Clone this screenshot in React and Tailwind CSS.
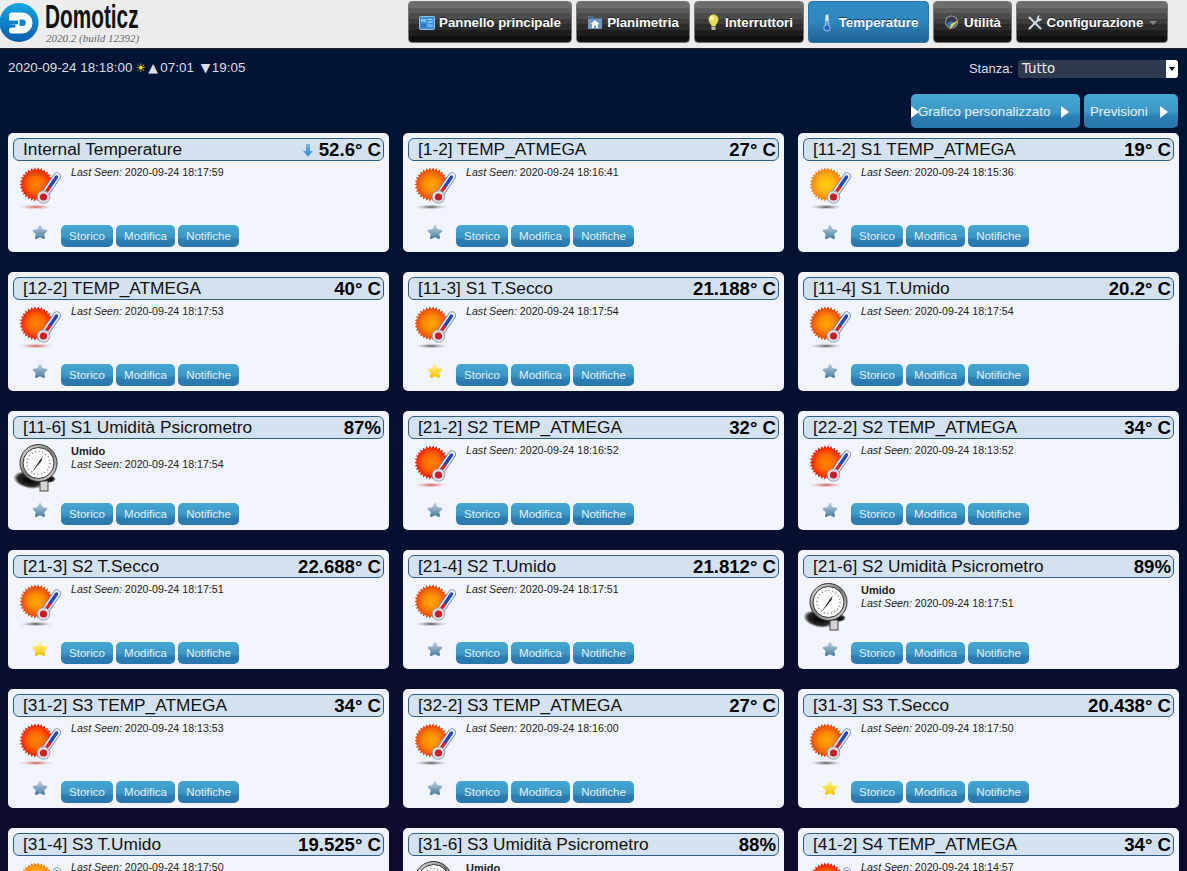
import React from "react";

const BTN_DARK = "bg-[linear-gradient(180deg,#6e6e6e_0,#6e6e6e_14%,#5c5c5c_14%,#5c5c5c_28%,#4c4c4c_28%,#4c4c4c_42%,#3c3c3c_42%,#3c3c3c_56%,#2c2c2c_56%,#2c2c2c_70%,#1e1e1e_70%,#1e1e1e_84%,#111111_84%,#111111_100%)]";
const BTN_ACTIVE = "bg-[linear-gradient(180deg,#2f8cc2_0,#2f88bf_50%,#2877ab_68%,#1f6593_100%)]";
const BTN_BLUE = "bg-[linear-gradient(180deg,#45a7d2_0,#3c98c7_52%,#2c7db2_68%,#2877ae_100%)]";

function PanelIcon() {
  return (
    <svg width="16" height="14" viewBox="0 0 16 14">
      <rect x="0.5" y="0.5" width="15" height="13" rx="1" fill="#3f8fd8" stroke="#8fc0e8" />
      <rect x="2" y="3" width="5" height="3" fill="#7cc0f0" />
      <rect x="8.5" y="3" width="5" height="1" fill="#b4dcf6" />
      <rect x="8.5" y="5.5" width="5" height="1" fill="#b4dcf6" />
      <rect x="2" y="8" width="5" height="3" fill="#2f73b8" />
      <rect x="8.5" y="8" width="5" height="3" fill="#6fb4e6" />
    </svg>
  );
}
function PlanIcon() {
  return (
    <svg width="16" height="15" viewBox="0 0 16 15">
      <path d="M1 1h5l1 2h8v11H1z" fill="#4e6c8e" />
      <path d="M1 4h14v10H1z" fill="#6f97c2" />
      <path d="M8 5l4.500 4H11v4H9v-2.500H7V13H5V9H3.500z" fill="#eef2f6" />
    </svg>
  );
}
function BulbIcon() {
  return (
    <svg width="11" height="17" viewBox="0 0 11 17">
      <path d="M5.500 0.500a5 5 0 0 1 5 5c0 2.500-2.300 3.700-3 6.500h-4c-.7-2.800-3-4-3-6.500a5 5 0 0 1 5-5z" fill="#e6dc55" />
      <ellipse cx="4" cy="4" rx="1.800" ry="2.200" fill="#fbf7b0" />
      <rect x="3.500" y="12.500" width="4" height="3.500" fill="#b9b9a8" />
    </svg>
  );
}
function ThermoNav() {
  return (
    <svg width="10" height="18" viewBox="0 0 10 18">
      <rect x="3.500" y="0.500" width="3" height="12" rx="1.500" fill="#dfeaf5" stroke="#9fc3e0" strokeWidth="0.700" />
      <circle cx="5" cy="14" r="3.200" fill="#2a62c8" stroke="#bcd6ec" strokeWidth="0.800" />
      <rect x="4.400" y="7" width="1.200" height="6" fill="#2a62c8" />
    </svg>
  );
}
function UtilIcon() {
  return (
    <svg width="16" height="16" viewBox="0 0 16 16">
      <circle cx="7.500" cy="7" r="6" fill="#333a44" stroke="#8b929a" strokeWidth="1.200" />
      <path d="M3 9a5 5 0 0 1 9 0l-2 3H5z" fill="#3272c4" />
      <path d="M15 5L5.500 15l1.500-6z" fill="#e8cf3c" />
    </svg>
  );
}
function ToolsIcon() {
  return (
    <svg width="16" height="16" viewBox="0 0 16 16" fill="none">
      <path d="M2.500 2.500l11 11" stroke="#cfd6de" strokeWidth="2" strokeLinecap="round" />
      <path d="M11 5L2.500 13.500" stroke="#cfd6de" strokeWidth="2.200" strokeLinecap="round" />
      <path d="M15 3.500a3 3 0 0 1-4.300 2.400L9.800 4a3 3 0 0 1 3.200-3.500L11.500 2.500l1.500 1.500z" fill="#dfe4ea" />
    </svg>
  );
}

function NavButton({ w, icon, label, active, caret }) {
  return (
    <div
      className={`flex h-[42px] items-center justify-center gap-1 rounded-[4px] border pt-px text-[13.300px] font-bold text-white [text-shadow:0_-1px_0_rgba(0,0,0,.6)] ${w} ${
        active ? `border-[#2a78ab] ${BTN_ACTIVE}` : `border-[#777] ${BTN_DARK}`
      }`}
    >
      <span className="flex w-[16px] justify-center">{icon}</span>
      <span>{label}</span>
      {caret && <span className="ml-[2px] h-0 w-0 border-x-[4px] border-t-[4px] border-x-transparent border-t-[#888]" />}
    </div>
  );
}

function Play({ className }) {
  return <span className={`inline-block h-0 w-0 border-y-[6px] border-l-[8px] border-y-transparent border-l-white ${className || ""}`} />;
}

function SunIcon({ tone }) {
  const id = `sun-${tone}`;
  const colors = {
    red: ["#ff8400", "#ff6a00", "#f01408"],
    orange: ["#ffa800", "#fb8a06", "#e83c10"],
    yellow: ["#ffcc10", "#ffb812", "#f07a18"],
  }[tone];
  const pts = [];
  const n = 60;
  for (let i = 0; i < n; i++) {
    const r = i % 2 ? 14.600 : 17;
    const a = (i / n) * Math.PI * 2;
    pts.push(`${(17.5 + r * Math.cos(a)).toFixed(2)},${(17.5 + r * Math.sin(a)).toFixed(2)}`);
  }
  return (
    <svg width="42" height="44" viewBox="0 0 42 44" className="overflow-visible">
      <defs>
        <radialGradient id={id}>
          <stop offset="0" stopColor={colors[0]} />
          <stop offset="0.45" stopColor={colors[1]} />
          <stop offset="1" stopColor={colors[2]} />
        </radialGradient>
        <radialGradient id={`${id}-s`}>
          <stop offset="0" stopColor={tone === "red" ? "#c8504a" : "#444"} />
          <stop offset="1" stopColor={tone === "red" ? "#f0c8c8" : "#cfd4dc"} stopOpacity="0.100" />
        </radialGradient>
      </defs>
      <ellipse cx="17" cy="40" rx="16" ry="2.500" fill={`url(#${id}-s)`} />
      <polygon points={pts.join(" ")} fill={`url(#${id})`} />
      <path d="M24.500 29L38 9.500" stroke="#6f86b4" strokeWidth="8" strokeLinecap="round" />
      <path d="M24.500 29L38 9.500" stroke="#eef1f6" strokeWidth="6.400" strokeLinecap="round" />
      <path d="M31 19.500L37.500 10" stroke="#1f48c0" strokeWidth="3.400" strokeLinecap="round" />
      <path d="M24.500 29L31 19.500" stroke="#d8202a" strokeWidth="3.400" />
      <circle cx="24.500" cy="30" r="6.300" fill="#d8dde4" stroke="#8c98aa" strokeWidth="0.800" />
      <circle cx="24.500" cy="30" r="3.600" fill="#c81e28" />
    </svg>
  );
}

function GaugeIcon() {
  return (
    <svg width="44" height="50" viewBox="0 0 44 50" className="overflow-visible">
      <defs>
        <radialGradient id="gshadow">
          <stop offset="0" stopColor="#000" />
          <stop offset="0.7" stopColor="#111" stopOpacity="0.900" />
          <stop offset="1" stopColor="#000" stopOpacity="0" />
        </radialGradient>
        <linearGradient id="gring" x1="0" y1="0" x2="1" y2="1">
          <stop offset="0" stopColor="#f4f4f4" />
          <stop offset="0.5" stopColor="#777" />
          <stop offset="1" stopColor="#eee" />
        </linearGradient>
      </defs>
      <ellipse cx="15" cy="37" rx="16" ry="8.500" fill="url(#gshadow)" transform="rotate(12 15 37)" />
      <ellipse cx="34" cy="36" rx="8" ry="4" fill="url(#gshadow)" />
      <rect x="26" y="38" width="8" height="10" fill="#d4d4d4" stroke="#444" strokeWidth="1" />
      <circle cx="24.500" cy="20" r="18.500" fill="url(#gring)" stroke="#333" strokeWidth="1" />
      <circle cx="24.500" cy="20" r="15.500" fill="#fafbfb" stroke="#333" strokeWidth="1" />
      <circle cx="24.500" cy="20" r="11.500" fill="none" stroke="#8a8a8a" strokeWidth="1.500" strokeDasharray="1 2.600" />
      <path d="M17.500 30L26 17l2.500-3-1 4z" fill="#222" />
    </svg>
  );
}

function Star({ on }) {
  const id = on ? "star-on" : "star-off";
  return (
    <svg width="16" height="16" viewBox="0 0 16 16">
      <defs>
        <linearGradient id={id} x1="0" y1="0" x2="0" y2="1">
          <stop offset="0" stopColor={on ? "#fff48c" : "#b8ccdc"} />
          <stop offset="1" stopColor={on ? "#f2c400" : "#4f7fa2"} />
        </linearGradient>
      </defs>
      <polygon
        points="8,2 10,6 14.300,6.700 11.200,9.800 12,14 8,12 4,14 4.800,9.800 1.700,6.700 6,6"
        fill={`url(#${id})`}
        stroke={`url(#${id})`}
        strokeWidth="2"
        strokeLinejoin="round"
      />
    </svg>
  );
}

function TrendDown() {
  return (
    <svg width="10" height="14" viewBox="0 0 10 14">
      <defs>
        <linearGradient id="trend" x1="0" y1="0" x2="0" y2="1">
          <stop offset="0" stopColor="#7db6e6" />
          <stop offset="1" stopColor="#2f86d8" />
        </linearGradient>
      </defs>
      <path d="M3 1h4v7h3l-5 5.500L0 8h3z" fill="url(#trend)" />
    </svg>
  );
}

function SmallButton({ w, label }) {
  return (
    <div className={`flex h-[22px] items-center justify-center rounded-[5px] pt-px text-[11.500px] text-[#e4eff7] ${BTN_BLUE} ${w}`}>
      {label}
    </div>
  );
}

function Card({ title, value, seen, kind, star, trend }) {
  const num = parseFloat(value);
  const tone = num < 20 ? "yellow" : num < 30 ? "orange" : "red";
  return (
    <div className="h-[119px] rounded-[5px] bg-[#f1f4fa] px-[5px] pt-[5px] text-black">
      <div className="flex h-[23px] items-center rounded-[6px] border border-[#2f5d85] bg-[#d4e1ef] pl-[9px] pr-[2px]">
        <span className="flex-1 truncate text-[17.300px] text-[#111]">{title}</span>
        {trend && (
          <span className="mr-[6px] flex">
            <TrendDown />
          </span>
        )}
        <span className="text-[18.600px] font-bold">{value}</span>
      </div>
      <div className="flex h-[60px]">
        <div className={`flex w-[58px] shrink-0 ${kind === "gauge" ? "pl-px pt-[4px]" : "pl-[6px] pt-[6px]"}`}>
          {kind === "gauge" ? <GaugeIcon /> : <SunIcon tone={tone} />}
        </div>
        <div className={`text-[10.650px] leading-[13px] text-[#222] ${kind === "gauge" ? "pt-[6px]" : "pt-[5px]"}`}>
          {kind === "gauge" && <div className="text-[11px] font-bold">Umido</div>}
          <div>
            <em>Last Seen:</em> {seen}
          </div>
        </div>
      </div>
      <div className="flex h-[30px] items-start">
        <div className="flex w-[48px] pl-[19px] pt-[3px]">
          <Star on={star} />
        </div>
        <div className="flex gap-[3px] pt-[4px]">
          <SmallButton w="w-[52px]" label="Storico" />
          <SmallButton w="w-[59px]" label="Modifica" />
          <SmallButton w="w-[61px]" label="Notifiche" />
        </div>
      </div>
    </div>
  );
}

const CARDS = [
  { title: "Internal Temperature", value: "52.6° C", seen: "2020-09-24 18:17:59", trend: true },
  { title: "[1-2] TEMP_ATMEGA", value: "27° C", seen: "2020-09-24 18:16:41" },
  { title: "[11-2] S1 TEMP_ATMEGA", value: "19° C", seen: "2020-09-24 18:15:36" },
  { title: "[12-2] TEMP_ATMEGA", value: "40° C", seen: "2020-09-24 18:17:53" },
  { title: "[11-3] S1 T.Secco", value: "21.188° C", seen: "2020-09-24 18:17:54", star: true },
  { title: "[11-4] S1 T.Umido", value: "20.2° C", seen: "2020-09-24 18:17:54" },
  { title: "[11-6] S1 Umidità Psicrometro", value: "87%", seen: "2020-09-24 18:17:54", kind: "gauge" },
  { title: "[21-2] S2 TEMP_ATMEGA", value: "32° C", seen: "2020-09-24 18:16:52" },
  { title: "[22-2] S2 TEMP_ATMEGA", value: "34° C", seen: "2020-09-24 18:13:52" },
  { title: "[21-3] S2 T.Secco", value: "22.688° C", seen: "2020-09-24 18:17:51", star: true },
  { title: "[21-4] S2 T.Umido", value: "21.812° C", seen: "2020-09-24 18:17:51" },
  { title: "[21-6] S2 Umidità Psicrometro", value: "89%", seen: "2020-09-24 18:17:51", kind: "gauge" },
  { title: "[31-2] S3 TEMP_ATMEGA", value: "34° C", seen: "2020-09-24 18:13:53" },
  { title: "[32-2] S3 TEMP_ATMEGA", value: "27° C", seen: "2020-09-24 18:16:00" },
  { title: "[31-3] S3 T.Secco", value: "20.438° C", seen: "2020-09-24 18:17:50", star: true },
  { title: "[31-4] S3 T.Umido", value: "19.525° C", seen: "2020-09-24 18:17:50" },
  { title: "[31-6] S3 Umidità Psicrometro", value: "88%", seen: "2020-09-24 18:17:50", kind: "gauge" },
  { title: "[41-2] S4 TEMP_ATMEGA", value: "34° C", seen: "2020-09-24 18:14:57" },
];

function Logo() {
  return (
    <div className="flex h-full items-start">
      <svg width="40" height="42" viewBox="0 0 40 42" className="mt-[1px]">
        <defs>
          <linearGradient id="logo" x1="0" y1="0" x2="0" y2="1">
            <stop offset="0" stopColor="#18a6e0" />
            <stop offset="1" stopColor="#0a5cae" />
          </linearGradient>
        </defs>
        <circle cx="19" cy="21.500" r="19.500" fill="url(#logo)" />
        <path d="M12 11.500h10a10.500 10.500 0 0 1 0 21H12a3 3 0 0 1 0-6h3.500v-3H12a3 3 0 0 1-3-3v-6a3 3 0 0 1 3-3z" fill="#fff" />
        <rect x="5" y="19.500" width="13" height="3.800" fill="#1280c8" />
        <path d="M19.500 18.500h3a3 3 0 0 1 0 6.500h-3z" fill="#1280c8" />
      </svg>
      <div className="ml-[5px]">
        <div className="h-[31px] w-[93px] origin-left scale-x-[0.63] whitespace-nowrap font-['Liberation_Sans'] text-[33px] font-bold leading-[33px] text-[#111]">
          Domoticz
        </div>
        <div className="ml-px mt-[1px] whitespace-nowrap font-['Liberation_Serif'] text-[11px] italic leading-[12px] text-[#666]">2020.2 (build 12392)</div>
      </div>
    </div>
  );
}

export default function App() {
  return (
    <div className="h-screen overflow-hidden bg-[linear-gradient(180deg,#011534_0,#0b0b2d_100%)] font-['Liberation_Sans',Arial,sans-serif]">
      <header className="flex h-[49px] justify-between border-b border-[#222] bg-[#ececec] pr-[19px]">
        <Logo />
        <nav className="flex gap-1 pt-px">
          <NavButton w="w-[164px]" icon={<PanelIcon />} label="Pannello principale" />
          <NavButton w="w-[114px]" icon={<PlanIcon />} label="Planimetria" />
          <NavButton w="w-[110px]" icon={<BulbIcon />} label="Interruttori" />
          <NavButton w="w-[121px]" icon={<ThermoNav />} label="Temperature" active />
          <NavButton w="w-[79px]" icon={<UtilIcon />} label="Utilità" />
          <NavButton w="w-[152px]" icon={<ToolsIcon />} label="Configurazione" caret />
        </nav>
      </header>

      <div className="flex h-[37px] items-center justify-between pl-2 pr-[9px] pt-[2px] text-[13.400px] text-[#dcdfe4]">
        <div className="flex items-center">
          <span>2020-09-24 18:18:00</span>
          <span className="ml-[3px] w-[13px] font-['DejaVu_Sans'] text-[12px] leading-none text-[#f5e100]">☀</span>
          <span className="mr-[2px] w-[10px] font-['DejaVu_Sans'] text-[12.500px] leading-none">▲</span>
          <span>07:01</span>
          <span className="ml-[7px] mr-px w-[10px] font-['DejaVu_Sans'] text-[12.500px] leading-none">▼</span>
          <span>19:05</span>
        </div>
        <div className="flex items-center gap-[5px]">
          <span className="text-[13px]">Stanza:</span>
          <div className="flex h-[18px] w-[160px] items-center justify-between rounded-[3px] bg-[#2d3a4f]">
            <span className="pl-1 pt-px font-['DejaVu_Sans'] text-[13.300px] text-[#f0f0f0]">Tutto</span>
            <span className="flex h-[18px] w-[12px] items-center justify-center rounded-r-[3px] bg-white">
              <span className="h-0 w-0 border-x-[3.500px] border-t-[4px] border-x-transparent border-t-black" />
            </span>
          </div>
        </div>
      </div>

      <div className="flex justify-end gap-1 pr-[9px] pt-2">
        <div className={`flex h-[34px] w-[169px] items-center rounded-[5px] pt-px text-[13.300px] text-[#e8f0f6] ${BTN_BLUE}`}>
          <Play />
          <span className="ml-[-1px]">Grafico personalizzato</span>
          <Play className="ml-[11px]" />
        </div>
        <div className={`flex h-[34px] w-[94px] items-center rounded-[5px] pl-[6px] pt-px text-[13.300px] text-[#e8f0f6] ${BTN_BLUE}`}>
          <span>Previsioni</span>
          <Play className="ml-[12px]" />
        </div>
      </div>

      <main className="grid grid-cols-[381px_381px_381px] gap-x-[14px] gap-y-[20px] pl-2 pt-[5px]">
        {CARDS.map((c) => (
          <Card key={c.title} {...c} />
        ))}
      </main>
    </div>
  );
}
